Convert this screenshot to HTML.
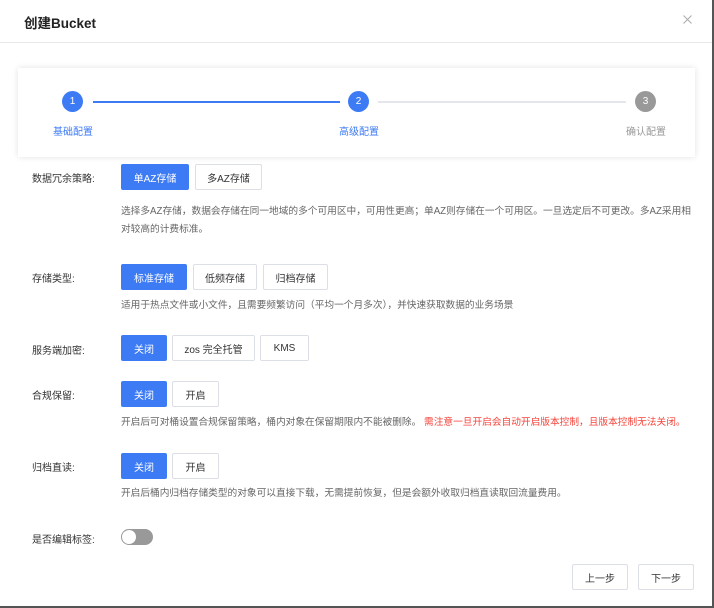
<!DOCTYPE html>
<html><head><meta charset="utf-8"><style>
*{margin:0;padding:0;box-sizing:border-box}
body{width:714px;height:608px;background:#fff;position:relative;overflow:hidden;font-family:"Liberation Sans","Noto Sans CJK SC",sans-serif;color:#333;font-size:10px}
.a{position:absolute;white-space:nowrap}
.b{position:absolute;height:26px;border:1px solid #dcdfe6;border-radius:2px;background:#fff;color:#333;font-size:10px;display:flex;align-items:center;justify-content:center}
.p{background:#3d7bf5;border-color:#3d7bf5;color:#fff}
.l{position:absolute;left:32px;font-size:10px;color:#333}
.d{position:absolute;left:121px;font-size:9.7px;color:#666;line-height:18px}
.c{position:absolute;width:21px;height:21px;border-radius:50%;color:#fff;font-size:10px;display:flex;align-items:center;justify-content:center}
</style></head><body>
<div style="position:absolute;right:0;top:0;width:2px;height:608px;background:#555"></div>
<div style="position:absolute;left:0;bottom:0;width:714px;height:2px;background:#555"></div>
<div class="a" style="left:24px;top:12px;font-size:13.5px;font-weight:bold;color:#222">创建Bucket</div>
<svg style="position:absolute;left:683px;top:15px" width="9" height="9" viewBox="0 0 9 9"><path d="M0.5 0.5L8.5 8.5M8.5 0.5L0.5 8.5" stroke="#aaa" stroke-width="1"/></svg>
<div style="position:absolute;left:0;top:42px;width:712px;height:1px;background:#e8e8e8"></div>
<div style="position:absolute;left:18px;top:68px;width:677px;height:89px;background:#fff;box-shadow:0 0 6px rgba(0,0,0,.12)"></div>
<div style="position:absolute;left:93px;top:101px;width:247px;height:1.5px;background:#3d7bf5"></div>
<div style="position:absolute;left:378px;top:101px;width:248px;height:1.5px;background:#e4e6eb"></div>
<div class="c" style="left:62px;top:91px;background:#3d7bf5">1</div>
<div class="c" style="left:348px;top:91px;background:#3d7bf5">2</div>
<div class="c" style="left:635px;top:91px;background:#999">3</div>
<div class="a" style="left:53px;top:123px;color:#3d7bf5">基础配置</div>
<div class="a" style="left:339px;top:123px;color:#3d7bf5">高级配置</div>
<div class="a" style="left:626px;top:123px;color:#999">确认配置</div>

<div class="l" style="top:170px">数据冗余策略:</div>
<div class="b p" style="left:121px;top:164px;width:68px">单AZ存储</div>
<div class="b" style="left:195px;top:164px;width:67px">多AZ存储</div>
<div class="d" style="top:203px">选择多AZ存储，数据会存储在同一地域的多个可用区中，可用性更高；单AZ则存储在一个可用区。一旦选定后不可更改。多AZ采用相<br>对较高的计费标准。</div>

<div class="l" style="top:270px">存储类型:</div>
<div class="b p" style="left:121px;top:264px;width:66px">标准存储</div>
<div class="b" style="left:193px;top:264px;width:64px">低频存储</div>
<div class="b" style="left:263px;top:264px;width:65px">归档存储</div>
<div class="d" style="top:297px">适用于热点文件或小文件，且需要频繁访问（平均一个月多次），并快速获取数据的业务场景</div>

<div class="l" style="top:342px">服务端加密:</div>
<div class="b p" style="left:121px;top:335px;width:46px">关闭</div>
<div class="b" style="left:172px;top:335px;width:83px">zos 完全托管</div>
<div class="b" style="left:260px;top:335px;width:49px">KMS</div>

<div class="l" style="top:387px">合规保留:</div>
<div class="b p" style="left:121px;top:381px;width:46px">关闭</div>
<div class="b" style="left:172px;top:381px;width:47px">开启</div>
<div class="d" style="top:414px">开启后可对桶设置合规保留策略，桶内对象在保留期限内不能被删除。 <span style="color:#f5443b">需注意一旦开启会自动开启版本控制，且版本控制无法关闭。</span></div>

<div class="l" style="top:459px">归档直读:</div>
<div class="b p" style="left:121px;top:453px;width:46px">关闭</div>
<div class="b" style="left:172px;top:453px;width:47px">开启</div>
<div class="d" style="top:485px">开启后桶内归档存储类型的对象可以直接下载，无需提前恢复，但是会额外收取归档直读取回流量费用。</div>

<div class="l" style="top:531px">是否编辑标签:</div>
<div style="position:absolute;left:121px;top:529px;width:32px;height:16px;border-radius:8px;background:#999"></div>
<div style="position:absolute;left:122px;top:530px;width:14px;height:14px;border-radius:50%;background:#fff"></div>

<div class="b" style="left:572px;top:564px;width:56px;height:26px">上一步</div>
<div class="b" style="left:638px;top:564px;width:56px;height:26px">下一步</div>
</body></html>
